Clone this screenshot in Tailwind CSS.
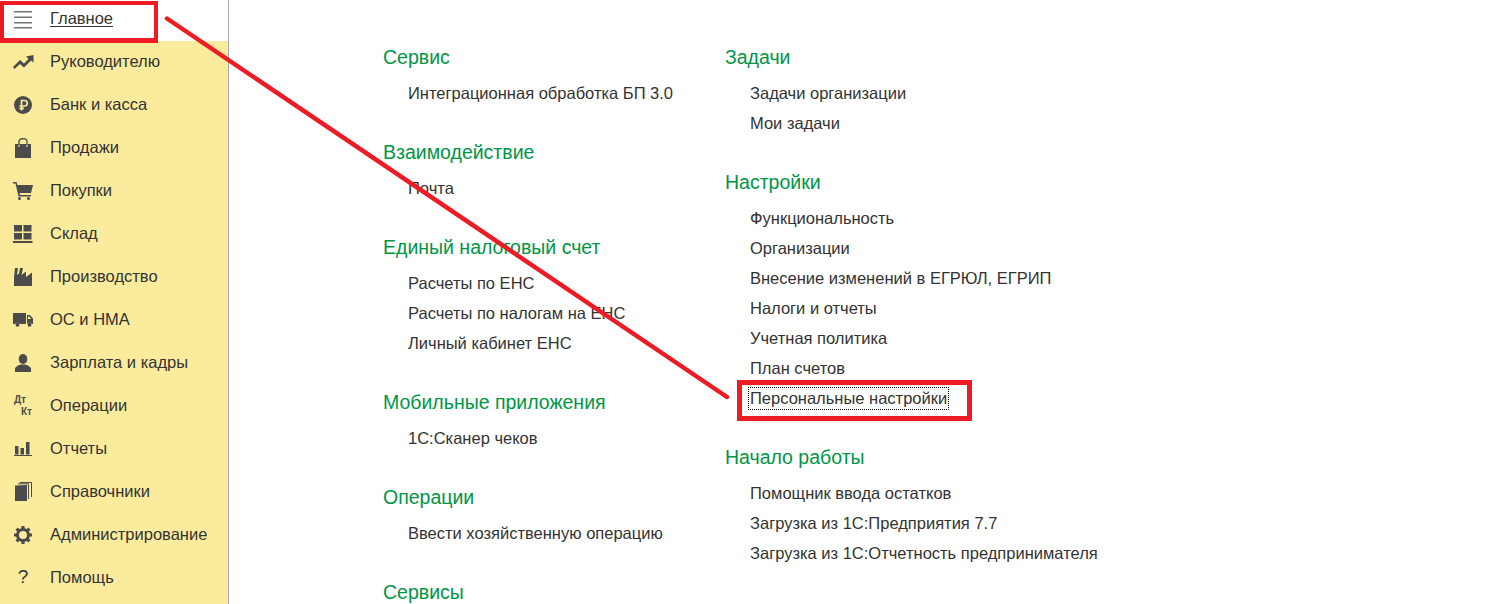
<!DOCTYPE html>
<html lang="ru">
<head>
<meta charset="utf-8">
<script src="https://cdn.jsdelivr.net/npm/@tailwindcss/browser@4"></script>
</head>
<body class="bg-white">
<div class="relative flex h-[604px] w-[1491px] overflow-hidden bg-white font-['Liberation_Sans',Arial,sans-serif] text-[16.5px] text-[#333]">
  <aside class="flex w-[229px] shrink-0 flex-col border-r border-[#a9a9a9] bg-[#fbec9d]">
    <a class="flex h-[41px] items-center bg-white pb-[4px]">
      <span class="flex w-[50px] justify-center pr-[4px]"><svg width="18" height="20" viewBox="0 0 18 20" fill="#777"><rect x="0" y="2" width="18" height="1.500"/><rect x="0" y="7.500" width="18" height="1.500"/><rect x="0" y="13" width="18" height="1.500"/><rect x="0" y="18" width="18" height="1.500"/></svg></span>
      <span class="underline underline-offset-2">Главное</span>
    </a>
    <a class="flex h-[43px] items-center pb-[2px]">
      <span class="flex w-[50px] justify-center pr-[4px]"><svg width="21" height="14" viewBox="0 0 21 14" fill="#4b4b4b"><path d="M1.500 14 L0 12 L7 5 L11 8.500 L15.500 4 L13 1.500 L20.500 0 L20.500 7.500 L18 5.500 L11 12.500 L7 9 Z"/></svg></span>
      <span>Руководителю</span>
    </a>
    <a class="flex h-[43px] items-center pb-[2px]">
      <span class="flex w-[50px] justify-center pr-[4px]"><svg width="18" height="18" viewBox="0 0 18 18"><circle cx="9" cy="9" r="9" fill="#4b4b4b"/><path d="M7.500 14.500V4.500h3a2.700 2.700 0 0 1 0 5.500H5.500M5.500 12.300H10" fill="none" stroke="#fbec9d" stroke-width="1.700"/></svg></span>
      <span>Банк и касса</span>
    </a>
    <a class="flex h-[43px] items-center pb-[2px]">
      <span class="flex w-[50px] justify-center pr-[4px]"><svg width="16" height="20" viewBox="0 0 16 20" fill="#4b4b4b"><path d="M0 6h3.500v3h1V6h7v3h1V6H16v14H0z"/><path d="M4 7V3.500a4 3 0 0 1 8 0V7" fill="none" stroke="#4b4b4b" stroke-width="1.300"/></svg></span>
      <span>Продажи</span>
    </a>
    <a class="flex h-[43px] items-center pb-[2px]">
      <span class="ml-[13px] mr-[17px] flex w-[20px] justify-center"><svg width="20" height="18" viewBox="0 0 20 18" fill="#4b4b4b"><path d="M0 0h3.500l1 3H20l-2 8H6.500l.5 2h11v1.500H5.500L2.500 1.500H0z"/><circle cx="6.500" cy="16.500" r="1.500"/><circle cx="15.500" cy="16.500" r="1.500"/></svg></span>
      <span>Покупки</span>
    </a>
    <a class="flex h-[43px] items-center pb-[2px]">
      <span class="flex w-[50px] justify-center pr-[4px]"><svg width="20" height="18" viewBox="0 0 20 18" fill="#4b4b4b"><rect x="1" y="0" width="8" height="6.500"/><rect x="10.500" y="0" width="8" height="6.500"/><rect x="1" y="8" width="8" height="6.500"/><rect x="10.500" y="8" width="8" height="6.500"/><rect x="0" y="16" width="19.500" height="2"/></svg></span>
      <span>Склад</span>
    </a>
    <a class="flex h-[43px] items-center pb-[2px]">
      <span class="flex w-[50px] justify-center pr-[4px]"><svg width="18" height="18" viewBox="0 0 18 18" fill="#4b4b4b"><path d="M0 18V9L1 0h3L3 7l2-1.500L6 0h3L7.500 7 12 3.500V9l6-4.500V18z"/></svg></span>
      <span>Производство</span>
    </a>
    <a class="flex h-[43px] items-center pb-[2px]">
      <span class="ml-[13px] mr-[17px] flex w-[20px] justify-center"><svg width="20" height="14" viewBox="0 0 20 14" fill="#4b4b4b"><path d="M0 0h13v11H7a3 3 0 0 0-5 0H0z"/><path d="M14 2h3l3 3.500V11h-1a3 3 0 0 0-5 0zM15 3.500V6h3.200l-2-2.500z"/><circle cx="4.500" cy="11.800" r="2"/><circle cx="16.500" cy="11.800" r="2"/></svg></span>
      <span>ОС и НМА</span>
    </a>
    <a class="flex h-[43px] items-center pb-[2px]">
      <span class="flex w-[50px] justify-center pr-[4px]"><svg width="16" height="18" viewBox="0 0 16 18" fill="#4b4b4b"><ellipse cx="8" cy="5" rx="4.300" ry="5"/><path d="M0 18v-3c0-2 3-3.500 5.500-4.500h5C13 11.500 16 13 16 15v3z"/></svg></span>
      <span>Зарплата и кадры</span>
    </a>
    <a class="flex h-[43px] items-center pb-[2px]">
      <span class="mr-[4px] flex h-[24px] w-[46px] shrink-0 text-[10px] leading-none font-bold text-[#4b4b4b]"><span class="mt-[1px] ml-[14px] w-[7px]">Дт</span><span class="mt-[13px]">Кт</span></span>
      <span>Операции</span>
    </a>
    <a class="flex h-[43px] items-center pb-[2px]">
      <span class="flex w-[50px] justify-center pr-[4px]"><svg width="18" height="14" viewBox="0 0 18 14" fill="#4b4b4b"><rect x="1" y="4" width="3.500" height="8.500"/><rect x="6.500" y="6" width="3.500" height="6.500"/><rect x="12" y="0" width="3.500" height="12.500"/><rect x="0" y="13" width="18" height="1"/></svg></span>
      <span>Отчеты</span>
    </a>
    <a class="flex h-[43px] items-center pb-[2px]">
      <span class="flex w-[50px] justify-center pr-[4px]"><svg width="17" height="19" viewBox="0 0 17 19" fill="#4b4b4b"><path d="M0 3.500 12 3v16H0z"/><path d="M3 1.800h10.500V17M5 .500h11.500V15" fill="none" stroke="#4b4b4b" stroke-width="1"/></svg></span>
      <span>Справочники</span>
    </a>
    <a class="flex h-[43px] items-center pb-[2px]">
      <span class="flex w-[50px] justify-center pr-[4px]"><svg width="18" height="18" viewBox="0 0 18 18"><circle cx="9" cy="9" r="5.500" fill="none" stroke="#4b4b4b" stroke-width="3"/><path stroke="#4b4b4b" stroke-width="3.200" d="M9 0v3.500M9 14.500V18M0 9h3.500M14.500 9H18M2.600 2.600l2.500 2.500M12.900 12.900l2.500 2.500M2.600 15.400l2.500-2.500M12.900 5.100l2.500-2.500"/></svg></span>
      <span>Администрирование</span>
    </a>
    <a class="flex h-[43px] items-center pb-[2px]">
      <span class="flex w-[50px] justify-center pr-[4px] text-[19px]">?</span>
      <span>Помощь</span>
    </a>
  </aside>

  <main class="flex pt-[42px] pl-[154px]">
    <div class="flex w-[342px] shrink-0 flex-col gap-[29px]">
      <section>
        <h2 class="mb-[6px] h-[30px] text-[19.5px] leading-[30px] text-[#009646]">Сервис</h2>
        <p class="h-[30px] pl-[25px] leading-[30px]">Интеграционная обработка БП 3.0</p>
      </section>
      <section>
        <h2 class="mb-[6px] h-[30px] text-[19.5px] leading-[30px] text-[#009646]">Взаимодействие</h2>
        <p class="h-[30px] pl-[25px] leading-[30px]">Почта</p>
      </section>
      <section>
        <h2 class="mb-[6px] h-[30px] text-[19.5px] leading-[30px] text-[#009646]">Единый налоговый счет</h2>
        <p class="h-[30px] pl-[25px] leading-[30px]">Расчеты по ЕНС</p>
        <p class="h-[30px] pl-[25px] leading-[30px]">Расчеты по налогам на ЕНС</p>
        <p class="h-[30px] pl-[25px] leading-[30px]">Личный кабинет ЕНС</p>
      </section>
      <section>
        <h2 class="mb-[6px] h-[30px] text-[19.5px] leading-[30px] text-[#009646]">Мобильные приложения</h2>
        <p class="h-[30px] pl-[25px] leading-[30px]">1С:Сканер чеков</p>
      </section>
      <section>
        <h2 class="mb-[6px] h-[30px] text-[19.5px] leading-[30px] text-[#009646]">Операции</h2>
        <p class="h-[30px] pl-[25px] leading-[30px]">Ввести хозяйственную операцию</p>
      </section>
      <section>
        <h2 class="mb-[6px] h-[30px] text-[19.5px] leading-[30px] text-[#009646]">Сервисы</h2>
      </section>
    </div>
    <div class="flex flex-col gap-[29px]">
      <section>
        <h2 class="mb-[6px] h-[30px] text-[19.5px] leading-[30px] text-[#009646]">Задачи</h2>
        <p class="h-[30px] pl-[25px] leading-[30px]">Задачи организации</p>
        <p class="h-[30px] pl-[25px] leading-[30px]">Мои задачи</p>
      </section>
      <section>
        <h2 class="mb-[6px] h-[30px] text-[19.5px] leading-[30px] text-[#009646]">Настройки</h2>
        <p class="h-[30px] pl-[25px] leading-[30px]">Функциональность</p>
        <p class="h-[30px] pl-[25px] leading-[30px]">Организации</p>
        <p class="h-[30px] pl-[25px] leading-[30px]">Внесение изменений в ЕГРЮЛ, ЕГРИП</p>
        <p class="h-[30px] pl-[25px] leading-[30px]">Налоги и отчеты</p>
        <p class="h-[30px] pl-[25px] leading-[30px]">Учетная политика</p>
        <p class="h-[30px] pl-[25px] leading-[30px]">План счетов</p>
        <p class="flex h-[30px] items-center pt-px pl-[25px]"><span class="-ml-[2px] h-[23px] border border-dotted border-black px-px leading-[21px]">Персональные настройки</span></p>
      </section>
      <section>
        <h2 class="mb-[6px] h-[30px] text-[19.5px] leading-[30px] text-[#009646]">Начало работы</h2>
        <p class="h-[30px] pl-[25px] leading-[30px]">Помощник ввода остатков</p>
        <p class="h-[30px] pl-[25px] leading-[30px]">Загрузка из 1С:Предприятия 7.7</p>
        <p class="h-[30px] pl-[25px] leading-[30px]">Загрузка из 1С:Отчетность предпринимателя</p>
      </section>
    </div>
  </main>

  <div class="absolute top-px left-0 h-[42px] w-[158px] border-[4px] border-b-[5px] border-[#ed1c24]"></div>
  <div class="absolute top-[380px] left-[737px] h-[41px] w-[235px] border-[5px] border-[#ed1c24]"></div>
  <svg class="absolute top-0 left-0" width="1491" height="604"><line x1="167" y1="18.500" x2="727" y2="397" stroke="#ed1c24" stroke-width="4.500" stroke-linecap="round"/></svg>
</div>
</body>
</html>
